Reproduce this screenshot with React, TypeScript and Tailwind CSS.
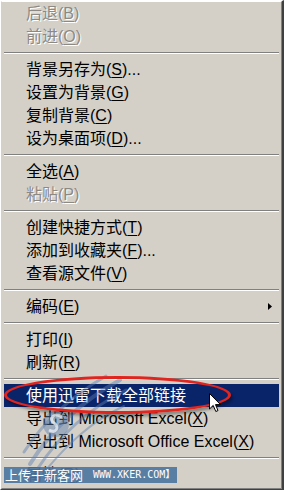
import React from 'react'

type Item =
  | { kind: 'sep' }
  | { kind: 'item'; text: string; key?: string; tail?: string; disabled?: boolean; active?: boolean; sub?: boolean }

const items: Item[] = [
  { kind: 'item', text: '后退', key: 'B', disabled: true },
  { kind: 'item', text: '前进', key: 'O', disabled: true },
  { kind: 'sep' },
  { kind: 'item', text: '背景另存为', key: 'S', tail: '...' },
  { kind: 'item', text: '设置为背景', key: 'G' },
  { kind: 'item', text: '复制背景', key: 'C' },
  { kind: 'item', text: '设为桌面项', key: 'D', tail: '...' },
  { kind: 'sep' },
  { kind: 'item', text: '全选', key: 'A' },
  { kind: 'item', text: '粘贴', key: 'P', disabled: true },
  { kind: 'sep' },
  { kind: 'item', text: '创建快捷方式', key: 'T' },
  { kind: 'item', text: '添加到收藏夹', key: 'F', tail: '...' },
  { kind: 'item', text: '查看源文件', key: 'V' },
  { kind: 'sep' },
  { kind: 'item', text: '编码', key: 'E', sub: true },
  { kind: 'sep' },
  { kind: 'item', text: '打印', key: 'I' },
  { kind: 'item', text: '刷新', key: 'R' },
  { kind: 'sep' },
  { kind: 'item', text: '使用迅雷下载全部链接', active: true },
  { kind: 'item', text: '导出到 Microsoft Excel', key: 'X' },
  { kind: 'item', text: '导出到 Microsoft Office Excel', key: 'X' },
  { kind: 'sep' },
  { kind: 'item', text: '属性', key: 'R' },
]

function Row({ it }: { it: Extract<Item, { kind: 'item' }> }) {
  const tone = it.active
    ? 'bg-[#0a246a] text-white'
    : it.disabled
      ? 'text-[#8c8984] [text-shadow:1px_1px_0_#ffffff]'
      : 'text-black'
  return (
    <div className={`relative flex h-[23px] items-center pl-[22px] text-[16px] leading-none whitespace-nowrap ${tone}`}>
      <span>
        {it.text}
        {it.key && (
          <>
            (<span className="underline underline-offset-[2px] decoration-1">{it.key}</span>)
          </>
        )}
        {it.tail}
      </span>
      {it.sub && (
        <svg className="absolute right-[7px] top-[8px]" width="4" height="7" viewBox="0 0 4 7">
          <path d="M0 0 L4 3.5 L0 7 Z" fill="#000" />
        </svg>
      )}
    </div>
  )
}

function Watermark() {
  return (
    <svg className="pointer-events-none absolute left-[20px] top-[372px]" width="110" height="100" viewBox="0 0 110 100">
      <g fill="none" stroke="#5d7fae" strokeOpacity="0.45" strokeLinecap="round">
        <path d="M10 92 C30 60 60 30 100 8" strokeWidth="4" />
        <path d="M18 96 C38 66 66 38 106 18" strokeWidth="3" />
        <path d="M4 80 C22 52 48 26 86 4" strokeWidth="3" />
        <path d="M26 98 C46 74 70 50 104 34" strokeWidth="2" />
      </g>
      <circle cx="36" cy="52" r="13" fill="#5d7fae" fillOpacity="0.45" />
      <path d="M42 45 C34 40 28 47 34 51 C40 55 36 62 29 58" fill="none" stroke="#e8edf4" strokeOpacity="0.8" strokeWidth="3" />
    </svg>
  )
}

export default function App() {
  return (
    <div
      className="relative h-[490px] w-[284px] overflow-hidden bg-[#d4d0c8] select-none"
      style={{ fontFamily: '"Liberation Sans", "Noto Sans CJK SC", sans-serif' }}
    >
      <div className="h-full border-t border-l border-r-2 border-b border-t-[#ffffff] border-l-[#ffffff] border-r-[#404040] border-b-[#404040]">
        <div className="h-full border-t border-l border-r border-b border-t-[#ffffff] border-l-[#d4d0c8] border-r-[#808080] border-b-[#808080] px-[2px]">
          {items.map((it, i) =>
            it.kind === 'sep' ? (
              <div key={i} className="py-[4px]">
                <div className="h-[1px] bg-[#808080]" />
                <div className="h-[1px] bg-white" />
              </div>
            ) : (
              <Row key={i} it={it} />
            ),
          )}
        </div>
      </div>

      <Watermark />

      {/* red annotation ring */}
      <div className="pointer-events-none absolute left-[4px] top-[376px] h-[38px] w-[227px] rounded-[50%/50%] border-[3px] border-[#e0241e] shadow-[2px_3px_3px_rgba(0,0,0,0.35)]" />

      {/* mouse cursor */}
      <svg className="pointer-events-none absolute left-[209px] top-[393px]" width="13" height="20" viewBox="0 0 13 20">
        <path d="M0.5 0.5 L0.5 16 L4.2 12.4 L6.8 18.5 L9 17.6 L6.5 11.6 L11.5 11.6 Z" fill="#fff" stroke="#000" strokeWidth="1" />
      </svg>

      {/* upload watermark bar */}
      <div className="absolute left-[4px] top-[467px] flex h-[16px] w-[173px] items-center gap-[10px] bg-[#4b74a0]/90 pl-[1px] text-white">
        <span className="text-[13px] leading-none">上传于新客网</span>
        <span className="text-[10px] leading-none" style={{ fontFamily: '"DejaVu Sans Mono", "Noto Sans CJK SC", monospace' }}>
          WWW.XKER.COM】
        </span>
      </div>
    </div>
  )
}
